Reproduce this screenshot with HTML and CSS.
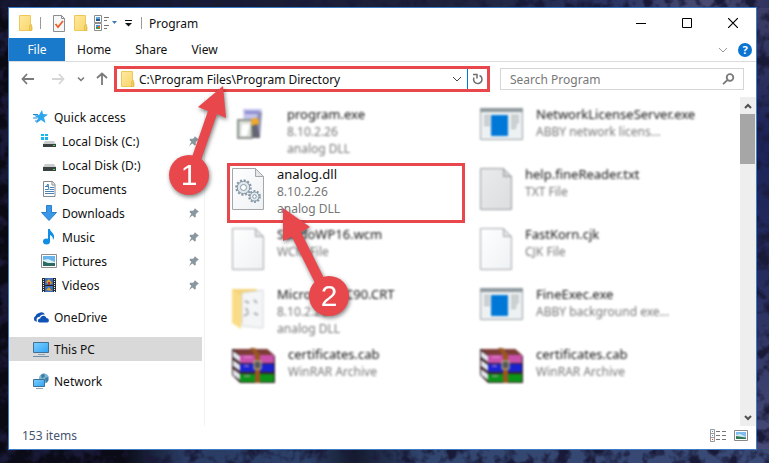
FILE: index.html
```
<!DOCTYPE html>
<html lang="en">
<head>
    <meta charset="UTF-8">
    <meta name="viewport" content="width=device-width, initial-scale=1.0">
    <title>Program</title>
    <link rel="stylesheet" href="styles.css">
</head>
<body>
    <!-- Shared icons -->
    <svg class="sprite" width="0" height="0" aria-hidden="true">
        <defs>
            <linearGradient id="folder-fill" x1="0" y1="0" x2="1" y2="1">
                <stop offset="0" stop-color="#ffe9a0"/>
                <stop offset="1" stop-color="#f8d567"/>
            </linearGradient>
            <linearGradient id="screen-fill" x1="0" y1="0" x2="1" y2="1">
                <stop offset="0" stop-color="#7fd0ff"/>
                <stop offset="1" stop-color="#2ea3f5"/>
            </linearGradient>
            <linearGradient id="page-fill" x1="0" y1="0" x2="1" y2="1">
                <stop offset="0" stop-color="#ffffff"/>
                <stop offset="1" stop-color="#eef1f4"/>
            </linearGradient>
        </defs>
        <symbol id="folder" viewBox="0 0 14 16">
            <path d="M.5.5h11v10l1.5 1v4H.5z" fill="url(#folder-fill)" stroke="#eec95a"/>
            <path d="M10.500 15.500v-5l2-1v6z" fill="#f3cf62" stroke="#dcb443" stroke-width=".6"/>
        </symbol>
        <symbol id="pin" viewBox="0 0 12 12">
            <path d="M6.500 1l4.500 3.800-1.300.5-2 2 .1 2.700-1.300.4-2-2L1 11l2.300-4L1.500 5l.6-1.200 2.900 0 1.700-1.800z" fill="#8b979f"/>
        </symbol>
        <symbol id="page" viewBox="0 0 32 42">
            <path d="M.5.5h23l8 8v33H.5z" fill="url(#page-fill)" stroke="#a3a8ab"/>
            <path d="M23.500.5v8h8z" fill="#e3e6e8" stroke="#a3a8ab"/>
        </symbol>
        <symbol id="app" viewBox="0 0 43 32">
            <path d="M.5.5h42v31H.5z" fill="#eef1f2" stroke="#9aa3a8"/>
            <path d="M0 0h43v4H0z" fill="#8f999e"/>
            <path d="M4 8h6M4 11h6M4 14h6M4 17h6M31 8h8M31 11h8M31 14h8M31 17h6M31 20h5" stroke="#a9aeb1" stroke-width="1.500"/>
            <path d="M11 7h17v21H11z" fill="#0078d7"/>
        </symbol>
        <symbol id="rar" viewBox="0 0 43 35">
            <path d="M0 1h35l8 7v27H8L0 27z" fill="#3b2429"/>
            <path d="M1 1h34l7 6H8z" fill="#7c3b36"/>
            <path d="M8 7h34v8H8z" fill="#c850ab"/>
            <path d="M8 16h34v8H8z" fill="#1a22cf"/>
            <path d="M8 26h34v8H8z" fill="#0b9417"/>
            <path d="M1 3l7 5v6l-7-5zM1 12l7 5v6l-7-5zM1 21l7 5v6l-7-5z" fill="#e5e8ef"/>
            <path d="M12 9h8M12 18h5M12 28h6" stroke="#efa1dd" stroke-width="1"/>
            <path d="M18 0h5l5 7v28h-5V7z" fill="#9a5721"/>
            <path d="M22 13h7v8h-7z" fill="#555" stroke="#d0c9a0"/>
        </symbol>
        <symbol id="chevron" viewBox="0 0 10 10">
            <path d="M1 3l4 4 4-4" fill="none" stroke="currentColor"/>
        </symbol>
    </svg>

    <!-- Night sky wallpaper: dark tree shapes over the blue -->
    <svg class="wallpaper" aria-hidden="true">
        <filter id="grain" x="0" y="0" width="100%" height="100%">
            <feTurbulence type="fractalNoise" baseFrequency="0.070" numOctaves="3" seed="8"/>
            <feColorMatrix values="0 0 0 0 0.010  0 0 0 0 0.010  0 0 0 0 0.040  0 0 0 4 -1.800"/>
        </filter>
        <rect width="100%" height="100%" filter="url(#grain)"/>
    </svg>

    <div class="window">
        <header class="titlebar">
            <svg class="folder-icon" viewBox="0 0 14 16"><use href="#folder"/></svg>
            <span class="separator"></span>
            <button class="quick-button" aria-label="Properties">
                <svg width="14" height="17" viewBox="0 0 14 17">
                    <path d="M1.500.5h8l3 3v13h-11z" fill="#f7f7f7" stroke="#8d8d8d"/>
                    <path d="M9.500.5v3h3" fill="none" stroke="#8d8d8d"/>
                    <path d="M3.500 9l2.500 3 5-6" fill="none" stroke="#e8602c" stroke-width="1.800"/>
                </svg>
            </button>
            <button class="quick-button" aria-label="New folder">
                <svg class="folder-icon" viewBox="0 0 14 16"><use href="#folder"/></svg>
            </button>
            <button class="quick-button view-menu" aria-label="Layout">
                <svg width="24" height="16" viewBox="0 0 24 16">
                    <path d="M.5.5h7v7h-7zM.5 8.500h7v7h-7z" fill="#fff" stroke="#8d8d8d"/>
                    <path d="M2 2h4v2H2z" fill="#5aa6e6"/><path d="M2 4h4v2H2z" fill="#285a8c"/>
                    <path d="M2 10h4v2H2z" fill="#4a90d9"/><path d="M2 12h4v2H2z" fill="#3c9a4c"/><path d="M4 11h2v2H4z" fill="#e0662c"/>
                    <path d="M10 2.500h5M10 5.500h3M10 10.500h5M10 13.500h3" stroke="#777"/>
                    <path d="M18 6h5l-2.500 3z" fill="#3f78bd"/>
                </svg>
            </button>
            <button class="quick-button" aria-label="Customize Quick Access Toolbar">
                <svg width="9" height="8" viewBox="0 0 9 8">
                    <path d="M1 1.500h7" stroke="#111"/><path d="M1 4h7L4.500 7.500z" fill="#111"/>
                </svg>
            </button>
            <span class="separator title-separator"></span>
            <h1 class="title">Program</h1>
            <div class="window-buttons">
                <button aria-label="Minimize"><svg width="10" height="10" viewBox="0 0 10 10"><path d="M0 5.500h10" stroke="#000"/></svg></button>
                <button aria-label="Maximize"><svg width="10" height="10" viewBox="0 0 10 10"><path d="M.5.5h9v9h-9z" fill="none" stroke="#000"/></svg></button>
                <button aria-label="Close"><svg width="10" height="10" viewBox="0 0 10 10"><path d="M0 0l10 10M10 0L0 10" stroke="#000" stroke-width="1.200"/></svg></button>
            </div>
        </header>

        <div class="ribbon">
            <button class="tab file-tab">File</button>
            <button class="tab">Home</button>
            <button class="tab">Share</button>
            <button class="tab">View</button>
            <div class="ribbon-right">
                <button class="icon-button expand" aria-label="Expand the ribbon"><svg width="10" height="10"><use href="#chevron"/></svg></button>
                <button class="icon-button help" aria-label="Help">?</button>
            </div>
        </div>

        <div class="toolbar">
            <div class="history">
                <button class="arrow" aria-label="Back"><svg width="14" height="12" viewBox="0 0 14 12"><path d="M6 1L1.500 6 6 11M2 6h11" fill="none" stroke="#7a7a7a" stroke-width="1.800"/></svg></button>
                <button class="arrow" aria-label="Forward"><svg width="14" height="12" viewBox="0 0 14 12"><path d="M8 1l4.500 5L8 11M12 6H1" fill="none" stroke="#d6d6d6" stroke-width="1.800"/></svg></button>
                <button class="recent" aria-label="Recent locations"><svg width="8" height="8" viewBox="0 0 8 8"><path d="M1 2.500l3 3 3-3" fill="none" stroke="#777" stroke-width="1.500"/></svg></button>
                <button class="up" aria-label="Up"><svg width="12" height="14" viewBox="0 0 12 14"><path d="M1 6l5-4.500L11 6M6 2v11" fill="none" stroke="#7a7a7a" stroke-width="1.800"/></svg></button>
            </div>
            <div class="address">
                <svg class="folder-icon" viewBox="0 0 14 16"><use href="#folder"/></svg>
                <input type="text" aria-label="Address" value="C:\Program Files\Program Directory">
                <button class="icon-button history-menu" aria-label="Previous locations"><svg width="10" height="10"><use href="#chevron"/></svg></button>
                <button class="icon-button refresh" aria-label="Refresh">
                    <svg width="12" height="12" viewBox="0 0 12 12"><path d="M1 1.500h4v4M7.500 2.500a4.200 4.200 0 1 1-5.500 2" fill="none" stroke="#6d6d6d" stroke-width="1.500"/></svg>
                </button>
            </div>
            <div class="search">
                <input type="search" aria-label="Search Program" placeholder="Search Program">
                <svg width="13" height="12" viewBox="0 0 13 12"><circle cx="8" cy="4.500" r="3.300" fill="none" stroke="#7a7a7a" stroke-width="1.800"/><path d="M5.500 7L1 11.200" stroke="#7a7a7a" stroke-width="1.800"/></svg>
            </div>
        </div>

        <div class="main">
            <nav class="sidebar">
                <ul class="group">
                    <li><a href="#" class="place">
                        <svg viewBox="0 0 16 16"><path d="M9 1l1 4 5 .5-4 3 1.500 5.500-4.500-3-5 3.500 2-5.500-4-2.500 5-.5z" fill="#2ea6ee"/><path d="M0 5.500h5M0 9h4M2 12h3" stroke="#2485cf"/></svg>
                        Quick access</a></li>
                    <li><a href="#" class="place child">
                        <svg viewBox="0 0 16 16"><path d="M0 1h3v2H0zM4 1h3v2H4zM0 4h3v3H0zM4 4h3v3H4z" fill="#19b5ee"/><path d="M4 8h9l2 3H2z" fill="#c9cccd"/><path d="M2 11h13v3H2z" fill="#3b4043"/><path d="M12 12h2v1h-2z" fill="#36e53d"/></svg>
                        Local Disk (C:)</a><svg class="pin"><use href="#pin"/></svg></li>
                    <li><a href="#" class="place child">
                        <svg viewBox="0 0 16 16"><path d="M4 7h9l2 3H2z" fill="#c9cccd"/><path d="M2 10h13v4H2z" fill="#3b4043"/><path d="M12 12h2v1h-2z" fill="#36e53d"/></svg>
                        Local Disk (D:)</a><svg class="pin"><use href="#pin"/></svg></li>
                    <li><a href="#" class="place child">
                        <svg viewBox="0 0 16 16"><path d="M2.500.5h9l2.500 3v12H2.500z" fill="#fff" stroke="#858b8f"/><path d="M11 .5V4h3" fill="none" stroke="#858b8f"/><path d="M4 5.500h3M4 8.500h3M4 10.500h9M4 12.500h9M9 6.500h4M9 8.500h4" stroke="#4b83b4"/><path d="M5 6l2-3 1 6" fill="none" stroke="#2c79bb"/></svg>
                        Documents</a><svg class="pin"><use href="#pin"/></svg></li>
                    <li><a href="#" class="place child">
                        <svg viewBox="0 0 16 16"><path d="M5.500.5h5v7h5L8 15.500.5 7.500h5z" fill="#3997e8" stroke="#2b7fce"/></svg>
                        Downloads</a><svg class="pin"><use href="#pin"/></svg></li>
                    <li><a href="#" class="place child">
                        <svg viewBox="0 0 16 16"><ellipse cx="5.500" cy="12.500" rx="3.500" ry="3" fill="#118de4"/><path d="M7 0h2c0 3 5 4 4 9l-1 2c0-3-1-4-3-5v7H7z" fill="#118de4"/></svg>
                        Music</a><svg class="pin"><use href="#pin"/></svg></li>
                    <li><a href="#" class="place child">
                        <svg viewBox="0 0 16 16"><path d="M.5 1.500h15v13H.5z" fill="#fff" stroke="#8d8d8d"/><path d="M2 3h12v10H2z" fill="#66b5ee"/><path d="M2 7l5-1 7 3v4H2z" fill="#d9eff2"/><path d="M2 8l5 2 7 0v3H2z" fill="#2d6a62"/></svg>
                        Pictures</a><svg class="pin"><use href="#pin"/></svg></li>
                    <li><a href="#" class="place child">
                        <svg viewBox="0 0 16 16"><path d="M1 1h14v14H1z" fill="#2c2c2c"/><path d="M4 1h8v14H4z" fill="#3a70c4"/><path d="M2.500 2v13M13.500 2v13" stroke="#eee" stroke-dasharray="1 1"/><path d="M5 5l3-3 3 4-3 2z" fill="#e0a021"/><path d="M7 5h2v3H7z" fill="#b4322a"/><path d="M4 8.500h8" stroke="#222"/><path d="M5 13l3-3 3 4z" fill="#e0a021"/></svg>
                        Videos</a><svg class="pin"><use href="#pin"/></svg></li>
                </ul>
                <ul class="group">
                    <li><a href="#" class="place">
                        <svg viewBox="0 0 16 16"><path d="M3 12.500a3 3 0 0 1-.5-5.500A4 4 0 0 1 6 4a4.500 4.500 0 0 1 6 1.500C8 5 7 7 6.500 8 4 8 3 10 4 12.500z" fill="#1053b5"/><path d="M6.500 13.500c-2.500-.3-2-4 .7-4C8 5.500 13 6 13.300 9c3.200 0 3.400 4.200.7 4.500z" fill="#1053b5"/></svg>
                        OneDrive</a></li>
                </ul>
                <ul class="group">
                    <li class="selected"><a href="#" class="place">
                        <svg viewBox="0 0 16 16"><path d="M.5 1.500h15v10H.5z" fill="url(#screen-fill)" stroke="#3e7195"/><path d="M5 13.500h7" stroke="#93a5b2"/><path d="M0 15.500h16" stroke="#6c8dab"/></svg>
                        This PC</a></li>
                </ul>
                <ul class="group">
                    <li><a href="#" class="place">
                        <svg viewBox="0 0 16 16"><circle cx="11" cy="5.500" r="5" fill="#7db5d3"/><path d="M8 2l3-1.500 1 3-3 2zM12 5l3-1v4l-2 2z" fill="#3b7fa8"/><path d="M.5 6.500h11v7H.5z" fill="url(#screen-fill)" stroke="#3e7195"/><path d="M3 15.500h7" stroke="#93a5b2"/></svg>
                        Network</a></li>
                </ul>
            </nav>

            <ul class="files">
                <li class="file">
                    <svg width="42" height="32" viewBox="0 0 42 32"><path d="M11 1h19l-3 16H12z" fill="#c4c3ec"/><path d="M13 3h14v3H13z" fill="#8e8fd0"/><path d="M26 4h4l-2 25h-6z" fill="#8f91b8"/><path d="M6 12h14v18H6z" fill="#d9ded6" stroke="#8d928e" stroke-width="2"/><path d="M10 16h8l-3 12H9z" fill="#fff"/><circle cx="23" cy="14" r="4" fill="#f0a92c"/><path d="M20 18l5-2 3 14h-7z" fill="#62646f"/></svg>
                    <div class="info"><span class="name">program.exe</span><span>8.10.2.26</span><span>analog DLL</span></div>
                </li>
                <li class="file">
                    <svg width="43" height="32"><use href="#app"/></svg>
                    <div class="info"><span class="name">NetworkLicenseServer.exe</span><span>ABBY network licens...</span></div>
                </li>
                <li class="file highlighted">
                    <svg width="32" height="42" viewBox="0 0 32 42">
                        <use href="#page"/>
                        <g fill="#e2e9ee" stroke="#8799a6">
                            <circle cx="11.500" cy="19.500" r="7" stroke-width="2.500" stroke-dasharray="2 1.660"/>
                            <circle cx="11.500" cy="19.500" r="6.200"/>
                            <circle cx="11.500" cy="19.500" r="3" fill="#fff"/>
                            <circle cx="22.500" cy="28.500" r="5.200" stroke-width="2.500" stroke-dasharray="1.800 1.470"/>
                            <circle cx="22.500" cy="28.500" r="4.500"/>
                            <circle cx="22.500" cy="28.500" r="1.800" fill="#fff"/>
                        </g>
                    </svg>
                    <div class="info"><span class="name">analog.dll</span><span>8.10.2.26</span><span>analog DLL</span></div>
                </li>
                <li class="file">
                    <svg class="text-page" width="32" height="42"><use href="#page"/></svg>
                    <div class="info"><span class="name">help.fineReader.txt</span><span>TXT File</span></div>
                </li>
                <li class="file">
                    <svg width="32" height="42"><use href="#page"/></svg>
                    <div class="info"><span class="name">SandoWP16.wcm</span><span>WCM File</span></div>
                </li>
                <li class="file">
                    <svg width="32" height="42"><use href="#page"/></svg>
                    <div class="info"><span class="name">FastKorn.cjk</span><span>CJK File</span></div>
                </li>
                <li class="file">
                    <svg width="32" height="42" viewBox="0 0 32 42"><path d="M0 1h25v34H8z" fill="#f5d478"/><path d="M10 5l21-3v38l-21-2z" fill="#f4f5f6" stroke="#d5d8da"/><path d="M13 13l4 2M14 20l2 4M22 12l3 3M12 28l5-3M22 25l4 2" stroke="#aab1b6" stroke-width="2"/><path d="M0 1l9 7v33l-9-6z" fill="#fbdc86"/></svg>
                    <div class="info"><span class="name">Microsoft.VC90.CRT</span><span>8.10.2.26</span><span>analog DLL</span></div>
                </li>
                <li class="file">
                    <svg width="43" height="32"><use href="#app"/></svg>
                    <div class="info"><span class="name">FineExec.exe</span><span>ABBY background exe...</span></div>
                </li>
                <li class="file">
                    <svg width="43" height="35"><use href="#rar"/></svg>
                    <div class="info"><span class="name">certificates.cab</span><span>WinRAR Archive</span></div>
                </li>
                <li class="file">
                    <svg width="43" height="35"><use href="#rar"/></svg>
                    <div class="info"><span class="name">certificates.cab</span><span>WinRAR Archive</span></div>
                </li>
            </ul>

            <div class="scrollbar">
                <button aria-label="Scroll up"><svg width="8" height="8" viewBox="0 0 8 8"><path d="M1 6l3-3 3 3" fill="none" stroke="#505050" stroke-width="2"/></svg></button>
                <div class="thumb"></div>
                <button class="scroll-down" aria-label="Scroll down"><svg width="8" height="8" viewBox="0 0 8 8"><path d="M1 2l3 3 3-3" fill="none" stroke="#505050" stroke-width="2"/></svg></button>
            </div>
        </div>

        <footer class="statusbar">
            <span>153 items</span>
            <div class="view-buttons">
                <button class="icon-button" aria-label="Details view">
                    <svg width="16" height="13" viewBox="0 0 16 13"><path d="M.5.5h4v12h-4zM.5 4.500h4M.5 8.500h4" fill="#fff" stroke="#999"/><path d="M2 2h1v1H2zM2 6h1v1H2z" fill="#4a90d9"/><path d="M2 10h1v1H2z" fill="#e33"/><path d="M6 2.500h4M12 2.500h4M6 6.500h4M12 6.500h4M6 10.500h4M12 10.500h4" stroke="#777"/></svg>
                </button>
                <button class="icon-button" aria-label="Large icons view">
                    <svg width="14" height="11" viewBox="0 0 14 11"><path d="M.5.5h13v10H.5z" fill="#fff" stroke="#888"/><path d="M2 2h10v7H2z" fill="#7fbdf0"/><path d="M2 5l4-1 6 3v2H2z" fill="#d8ecf2"/><path d="M2 6l10 1.500V9H2z" fill="#2f7a55"/></svg>
                </button>
            </div>
        </footer>
    </div>

    <!-- Step markers drawn over the window -->
    <svg class="steps" width="769" height="463" viewBox="0 0 769 463">
        <g class="step">
            <path d="M223 86l3 32-9-4-16 46-9-3 16-46-10-4z"/>
            <circle cx="189" cy="175" r="20"/>
            <text x="189" y="185">1</text>
        </g>
        <g class="step">
            <path d="M283 208l27 19-9 5 23 46-9 5-23-46-9 4z"/>
            <circle cx="329" cy="296" r="20"/>
            <text x="329" y="306">2</text>
        </g>
    </svg>
</body>
</html>
```
FILE: styles.css
```
* {
    box-sizing: border-box;
}

body {
    margin: 0;
    min-height: 100vh;
    padding: 7px 12px 13px 8px;
    display: flex;
    position: relative;
    font-family: "Noto Sans", "Open Sans", sans-serif;
    font-size: 12px;
    color: #111;
    background:
        linear-gradient(to right, #0a0b16 0, #0a0b16 16%, #2a3c64 24%, #2c4068 40%, #141a2e 46%, #31466f 55%, #3a4a76 100%) bottom / 100% 14px no-repeat,
        linear-gradient(to right, #12142a 0, #20233c 60%, #2b3664 80%, #4a4b70 92%, #30335f 100%) top / 100% 8px no-repeat,
        linear-gradient(to bottom, #3f4068 0, #1c2358 30%, #262c5e 60%, #4a4d78 100%) right / 14px 100% no-repeat,
        #0a0a14;
}

ul {
    list-style: none;
    margin: 0;
    padding: 0;
}

button {
    border: none;
    padding: 0;
    font: inherit;
    color: inherit;
    background: none;
    cursor: pointer;
}

button svg {
    display: block;
    margin: 0 auto;
}

input {
    flex: 1;
    min-width: 0;
    border: none;
    outline: none;
    padding: 0;
    font: inherit;
    color: inherit;
    background: none;
}

.sprite {
    position: absolute;
}

.wallpaper {
    position: absolute;
    top: 0;
    left: 0;
    width: 100%;
    height: 100%;
}

.window {
    flex: 1;
    min-width: 0;
    display: flex;
    flex-direction: column;
    position: relative;
    background-color: #fff;
    border: 1px solid #3c7cc4;
}

.folder-icon {
    width: 14px;
    height: 16px;
    flex: none;
}

/* Title bar */
.titlebar {
    height: 30px;
    display: flex;
    align-items: center;
    padding-left: 10px;
}

.separator {
    width: 1px;
    height: 12px;
    margin: 0 7px;
    background-color: #999;
}

.title-separator {
    margin-left: 4px;
}

.quick-button {
    margin: 0 4px;
}

.view-menu {
    margin: 0 2px;
}

.title {
    margin: 0;
    font-size: 12px;
    font-weight: normal;
}

.window-buttons {
    display: flex;
    margin-left: auto;
}

.window-buttons button {
    width: 46px;
    height: 30px;
}

/* Ribbon tabs */
.ribbon {
    height: 24px;
    display: flex;
    border-bottom: 1px solid #dcdcdc;
}

.tab {
    padding: 0 12px;
}

.file-tab {
    width: 56px;
    color: #fff;
    background-color: #1979ca;
}

.ribbon-right {
    display: flex;
    align-items: center;
    gap: 7px;
    margin-left: auto;
    padding-right: 4px;
}

.icon-button {
    display: flex;
    align-items: center;
    justify-content: center;
}

.expand {
    width: 16px;
    color: #999;
}

.help {
    width: 14px;
    height: 14px;
    border-radius: 50%;
    font-weight: bold;
    font-size: 11px;
    color: #fff;
    background-color: #0b74d1;
}

/* Address row */
.toolbar {
    display: flex;
    align-items: center;
    padding: 4px 12px 5px 4px;
}

.history {
    display: flex;
}

.arrow {
    width: 30px;
}

.recent {
    width: 16px;
}

.up {
    width: 25px;
}

.address {
    flex: 366;
    height: 26px;
    display: flex;
    align-items: center;
    padding-left: 4px;
    border: 3px solid #e8474b;
}

.address input {
    margin-left: 4px;
}

.history-menu {
    width: 20px;
    height: 20px;
    color: #444;
}

.refresh {
    width: 20px;
    height: 20px;
    border-left: 1px solid #0078d7;
}

.search {
    flex: 225;
    height: 22px;
    display: flex;
    align-items: center;
    margin-left: 10px;
    padding: 0 8px 0 9px;
    border: 1px solid #d6d6d6;
}

.search input::placeholder {
    color: #777;
    opacity: 1;
}

/* Navigation and files */
.main {
    flex: 1;
    display: flex;
}

.sidebar {
    width: 196px;
    padding: 8px 2px 0 0;
    border-right: 1px solid #f2f2f2;
}

.group {
    margin-bottom: 8px;
}

.group li {
    height: 24px;
    display: flex;
    align-items: center;
}

.selected {
    background-color: #d9d9d9;
}

.place {
    flex: 1;
    display: flex;
    align-items: center;
    gap: 5px;
    padding-left: 24px;
    color: inherit;
    text-decoration: none;
}

.place svg {
    width: 16px;
    height: 16px;
}

.child {
    padding-left: 32px;
}

.pin {
    width: 12px;
    height: 12px;
    margin-right: 2px;
}

.files {
    flex: 1;
    display: grid;
    grid-template-columns: repeat(2, minmax(0, 1fr));
    grid-auto-rows: 60px;
    column-gap: 10px;
    padding: 6px 27px 0 22px;
}

.file {
    display: flex;
    gap: 13px;
    padding-left: 2px;
    border: 3px solid transparent;
    filter: blur(1.3px);
}

.file svg {
    flex: none;
    margin-top: 2px;
}

.highlighted {
    border-color: #e8474b;
    filter: none;
}

.text-page {
    filter: brightness(0.92);
}

.info {
    display: flex;
    flex-direction: column;
    line-height: 17px;
    white-space: nowrap;
    color: #777;
}

.name {
    font-size: 13px;
    color: #111;
}

.scrollbar {
    width: 16px;
    display: flex;
    flex-direction: column;
    background-color: #eee;
}

.scrollbar button {
    height: 17px;
}

.thumb {
    height: 50px;
    margin-right: 1px;
    background-color: #a6a6a6;
}

.scrollbar .scroll-down {
    margin-top: auto;
}

/* Status bar */
.statusbar {
    height: 23px;
    display: flex;
    align-items: center;
    justify-content: space-between;
    padding: 0 8px 4px 13px;
    color: #44546f;
}

.view-buttons {
    display: flex;
    gap: 8px;
}

/* Step markers */
.steps {
    position: absolute;
    top: 0;
    left: 0;
    pointer-events: none;
}

.step {
    fill: #e8474b;
    filter: drop-shadow(1px 2px 2px rgba(0, 0, 0, 0.5));
}

.step text {
    font-family: "Liberation Sans", Arial, sans-serif;
    font-size: 30px;
    text-anchor: middle;
    fill: #fff;
}
```
